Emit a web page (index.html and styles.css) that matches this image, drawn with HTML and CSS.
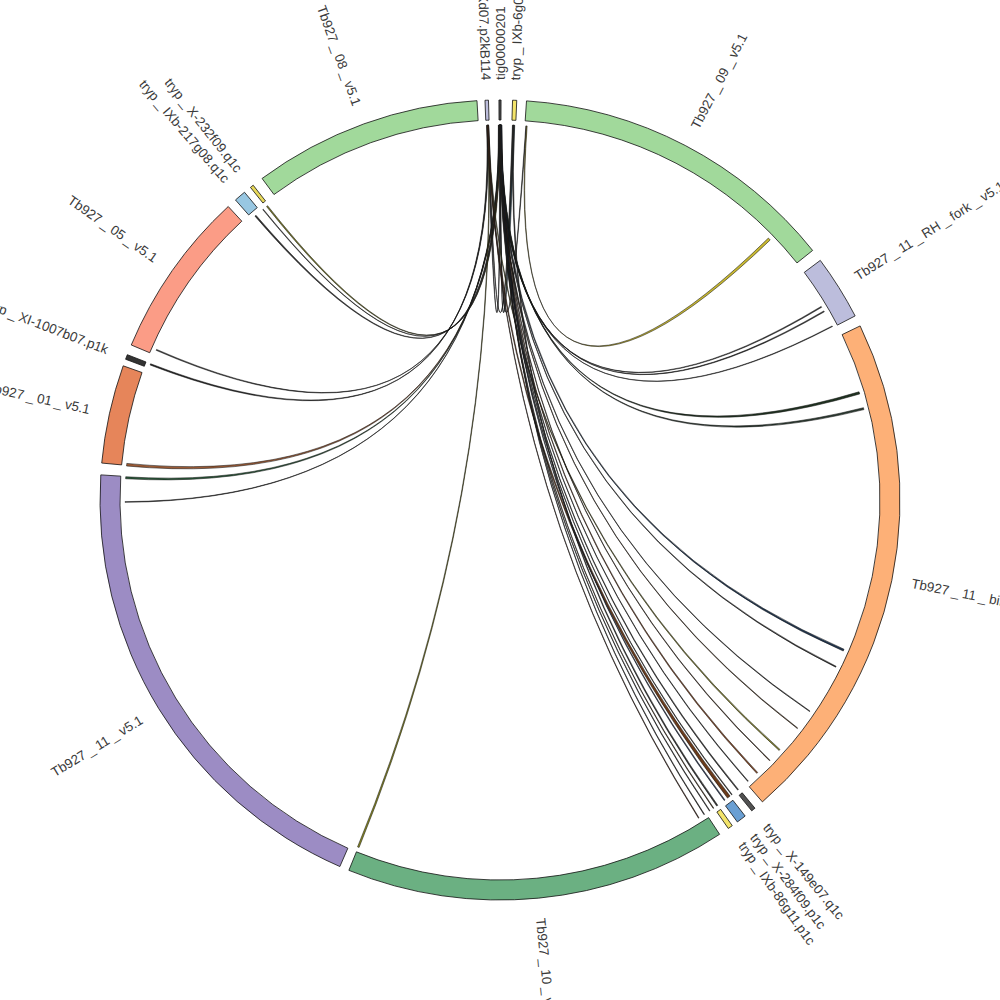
FILE: index.html
```html
<!DOCTYPE html>
<html>
<head>
<meta charset="utf-8">
<title>Chord diagram</title>
<link rel="stylesheet" href="styles.css">
</head>
<body>
<svg class="chart" width="1000" height="1000" viewBox="0 0 1000 1000">
  <g id="chords"></g>
  <g id="segments"></g>
  <g class="labels">
    <text class="lbl" transform="translate(500 500) rotate(-90)" x="420" dy="0.35em">tig00000201</text>
    <text class="lbl" transform="translate(500 500) rotate(-87.9)" x="420" dy="0.35em">tryp<tspan class="u" dx="3.1">_</tspan>IXb-6g05.p1k</text>
    <text class="lbl" transform="translate(500 500) rotate(-62.4)" x="420" dy="0.35em">Tb927<tspan class="u" dx="3.1">_</tspan>09<tspan class="u" dx="3.1">_</tspan>v5.1</text>
    <text class="lbl" transform="translate(500 500) rotate(-32.1)" x="420" dy="0.35em">Tb927<tspan class="u" dx="3.1">_</tspan>11<tspan class="u" dx="3.1">_</tspan>RH<tspan class="u" dx="3.1">_</tspan>fork<tspan class="u" dx="3.1">_</tspan>v5.1</text>
    <text class="lbl" transform="translate(500 500) rotate(11.4)" x="420" dy="0.35em">Tb927<tspan class="u" dx="3.1">_</tspan>11<tspan class="u" dx="3.1">_</tspan>bin<tspan class="u" dx="3.1">_</tspan>v5.1</text>
    <text class="lbl" transform="translate(500 500) rotate(50.7)" x="420" dy="0.35em">tryp<tspan class="u" dx="3.1">_</tspan>X-149e07.q1c</text>
    <text class="lbl" transform="translate(500 500) rotate(52.9)" x="420" dy="0.35em">tryp<tspan class="u" dx="3.1">_</tspan>X-284f09.p1c</text>
    <text class="lbl" transform="translate(500 500) rotate(54.85)" x="420" dy="0.35em">tryp<tspan class="u" dx="3.1">_</tspan>IXb-86g11.p1c</text>
    <text class="lbl" transform="translate(500 500) rotate(84.45)" x="420" dy="0.35em">Tb927<tspan class="u" dx="3.1">_</tspan>10<tspan class="u" dx="3.1">_</tspan>v5.1</text>

    <text class="lbl end" transform="translate(500 500) rotate(-31.4)" x="-420" dy="0.35em">Tb927<tspan class="u" dx="3.1">_</tspan>11<tspan class="u" dx="3.1">_</tspan>v5.1</text>
    <text class="lbl end" transform="translate(500 500) rotate(12.45)" x="-420" dy="0.35em">Tb927<tspan class="u" dx="3.1">_</tspan>01<tspan class="u" dx="3.1">_</tspan>v5.1</text>
    <text class="lbl end" transform="translate(500 500) rotate(20.95)" x="-420" dy="0.35em">tryp<tspan class="u" dx="3.1">_</tspan>XI-1007b07.p1k</text>
    <text class="lbl end" transform="translate(500 500) rotate(35)" x="-420" dy="0.35em">Tb927<tspan class="u" dx="3.1">_</tspan>05<tspan class="u" dx="3.1">_</tspan>v5.1</text>
    <text class="lbl end" transform="translate(500 500) rotate(49.45)" x="-420" dy="0.35em">tryp<tspan class="u" dx="3.1">_</tspan>IXb-217g08.q1c</text>
    <text class="lbl end" transform="translate(500 500) rotate(51.65)" x="-420" dy="0.35em">tryp<tspan class="u" dx="3.1">_</tspan>X-232f09.q1c</text>
    <text class="lbl end" transform="translate(500 500) rotate(70.1)" x="-420" dy="0.35em">Tb927<tspan class="u" dx="3.1">_</tspan>08<tspan class="u" dx="3.1">_</tspan>v5.1</text>
    <text class="lbl end" transform="translate(500 500) rotate(88.1)" x="-420" dy="0.35em">tryp<tspan class="u" dx="3.1">_</tspan>Xd07.p2kB114</text>
  </g>
</svg>
<script src="chart.js"></script>
</body>
</html>
```

FILE: styles.css
```css
html, body {
  margin: 0;
  padding: 0;
  background: #ffffff;
}

.chart {
  display: block;
  width: 1000px;
  height: 1000px;
  background: #ffffff;
}

.lbl {
  font-family: "Liberation Sans", Arial, sans-serif;
  font-size: 13.4px;
  fill: #3a3a3a;
}

.lbl.end {
  text-anchor: end;
}

.u {
  letter-spacing: 3.1px;
}

.seg {
  stroke: #111111;
  stroke-width: 0.8;
  stroke-linejoin: miter;
}

.chord {
  stroke: #151515;
  stroke-width: 0.55;
  stroke-linejoin: round;
}
```

FILE: chart.js
```js
(function () {
  var NS = 'http://www.w3.org/2000/svg';
  var C = 500, RIN = 380, ROUT = 400, RC = 375;

  function p(r, d) {
    var a = d * Math.PI / 180;
    return (C + r * Math.sin(a)).toFixed(2) + ' ' + (C - r * Math.cos(a)).toFixed(2);
  }

  // [start, end, colour]
  var segs = [
    [323.5, 356.7, '#a1d99b'],
    [357.85, 358.35, '#bcbddc'],
    [359.85, 360.15, '#525252'],
    [1.8, 2.4, '#f3e46a'],
    [3.8, 51.4, '#a1d99b'],
    [53.2, 62.6, '#bcbddc'],
    [64.2, 139.0, '#fdb077'],
    [140.4, 141.0, '#525252'],
    [142.2, 143.6, '#6a9fd3'],
    [144.5, 145.2, '#f3e46a'],
    [146.7, 202.2, '#6bb082'],
    [203.6, 273.6, '#9c8cc4'],
    [275.3, 289.6, '#e6855a'],
    [290.6, 291.3, '#333333'],
    [292.8, 317.2, '#fb9c86'],
    [318.6, 320.3, '#98c7e2'],
    [321.4, 321.9, '#e8d95a']
  ];

  var gs = document.getElementById('segments');
  segs.forEach(function (s) {
    var a = s[0], b = s[1];
    var large = (b - a) > 180 ? 1 : 0;
    var d = 'M' + p(ROUT, a) +
      ' A' + ROUT + ' ' + ROUT + ' 0 ' + large + ' 1 ' + p(ROUT, b) +
      ' L' + p(RIN, b) +
      ' A' + RIN + ' ' + RIN + ' 0 ' + large + ' 0 ' + p(RIN, a) + ' Z';
    var el = document.createElementNS(NS, 'path');
    el.setAttribute('d', d);
    el.setAttribute('class', 'seg');
    el.setAttribute('fill', s[2]);
    gs.appendChild(el);
  });

  // [source centre, source width, target centre, target width, fill]
  var chords = [
    [358.1, 0.15, 0.0, 0.15, '#333344'],
    [0.1, 0.1, 2.1, 0.3, '#335566'],
    [358.2, 0.1, 2.0, 0.2, '#333333'],
    [0.0, 0.1, 4.0, 0.1, '#333333'],
    [0.0, 0.1, 321.6, 0.2, '#7a7a20'],
    [359.9, 0.1, 320.8, 0.1, '#333333'],
    [359.8, 0.1, 319.3, 0.2, '#333333'],
    [358.1, 0.1, 293.6, 0.15, '#333333'],
    [358.0, 0.1, 291.2, 0.2, '#222222'],
    [0.1, 0.15, 275.4, 0.4, '#9a5a35'],
    [0.0, 0.1, 273.4, 0.3, '#2a5a3a'],
    [359.9, 0.1, 269.7, 0.1, '#333333'],
    [358.2, 0.1, 202.2, 0.25, '#8a8a20'],
    [4.1, 0.1, 45.9, 0.4, '#c8b830'],
    [0.1, 0.1, 59.0, 0.15, '#333333'],
    [0.2, 0.1, 59.8, 0.15, '#333333'],
    [0.0, 0.1, 62.4, 0.1, '#333333'],
    [0.1, 0.15, 73.4, 0.35, '#1f3320'],
    [0.2, 0.1, 75.9, 0.3, '#2a3a30'],
    [0.1, 0.15, 113.6, 0.3, '#1f3550'],
    [0.0, 0.1, 116.4, 0.15, '#333333'],
    [359.9, 0.1, 124.3, 0.1, '#333333'],
    [0.0, 0.1, 127.5, 0.1, '#5a3a1a'],
    [358.2, 0.1, 131.8, 0.2, '#8a8a30'],
    [0.2, 0.1, 134.0, 0.1, '#5a3a20'],
    [0.1, 0.1, 136.7, 0.2, '#8a4a25'],
    [0.0, 0.1, 138.6, 0.1, '#333333'],
    [0.1, 0.1, 140.6, 0.15, '#333333'],
    [0.0, 0.1, 141.8, 0.1, '#333333'],
    [358.1, 0.15, 142.4, 0.5, '#6a3a1a'],
    [0.2, 0.1, 143.2, 0.15, '#2a3a60'],
    [2.1, 0.15, 144.6, 0.2, '#333333'],
    [0.0, 0.1, 145.3, 0.1, '#5a3a1a'],
    [359.9, 0.1, 146.0, 0.1, '#333333'],
    [0.1, 0.1, 147.0, 0.1, '#333333'],
    [358.2, 0.1, 148.0, 0.1, '#5a3020']
  ];

  var gc = document.getElementById('chords');
  chords.forEach(function (c) {
    var a1 = c[0] - c[1] / 2, a2 = c[0] + c[1] / 2;
    var b1 = c[2] - c[3] / 2, b2 = c[2] + c[3] / 2;
    var d = 'M' + p(RC, a1) +
      ' A' + RC + ' ' + RC + ' 0 0 1 ' + p(RC, a2) +
      ' Q500 500 ' + p(RC, b1) +
      ' A' + RC + ' ' + RC + ' 0 0 1 ' + p(RC, b2) +
      ' Q500 500 ' + p(RC, a1) + ' Z';
    var el = document.createElementNS(NS, 'path');
    el.setAttribute('d', d);
    el.setAttribute('class', 'chord');
    el.setAttribute('fill', c[4]);
    gc.appendChild(el);
  });
})();
```
